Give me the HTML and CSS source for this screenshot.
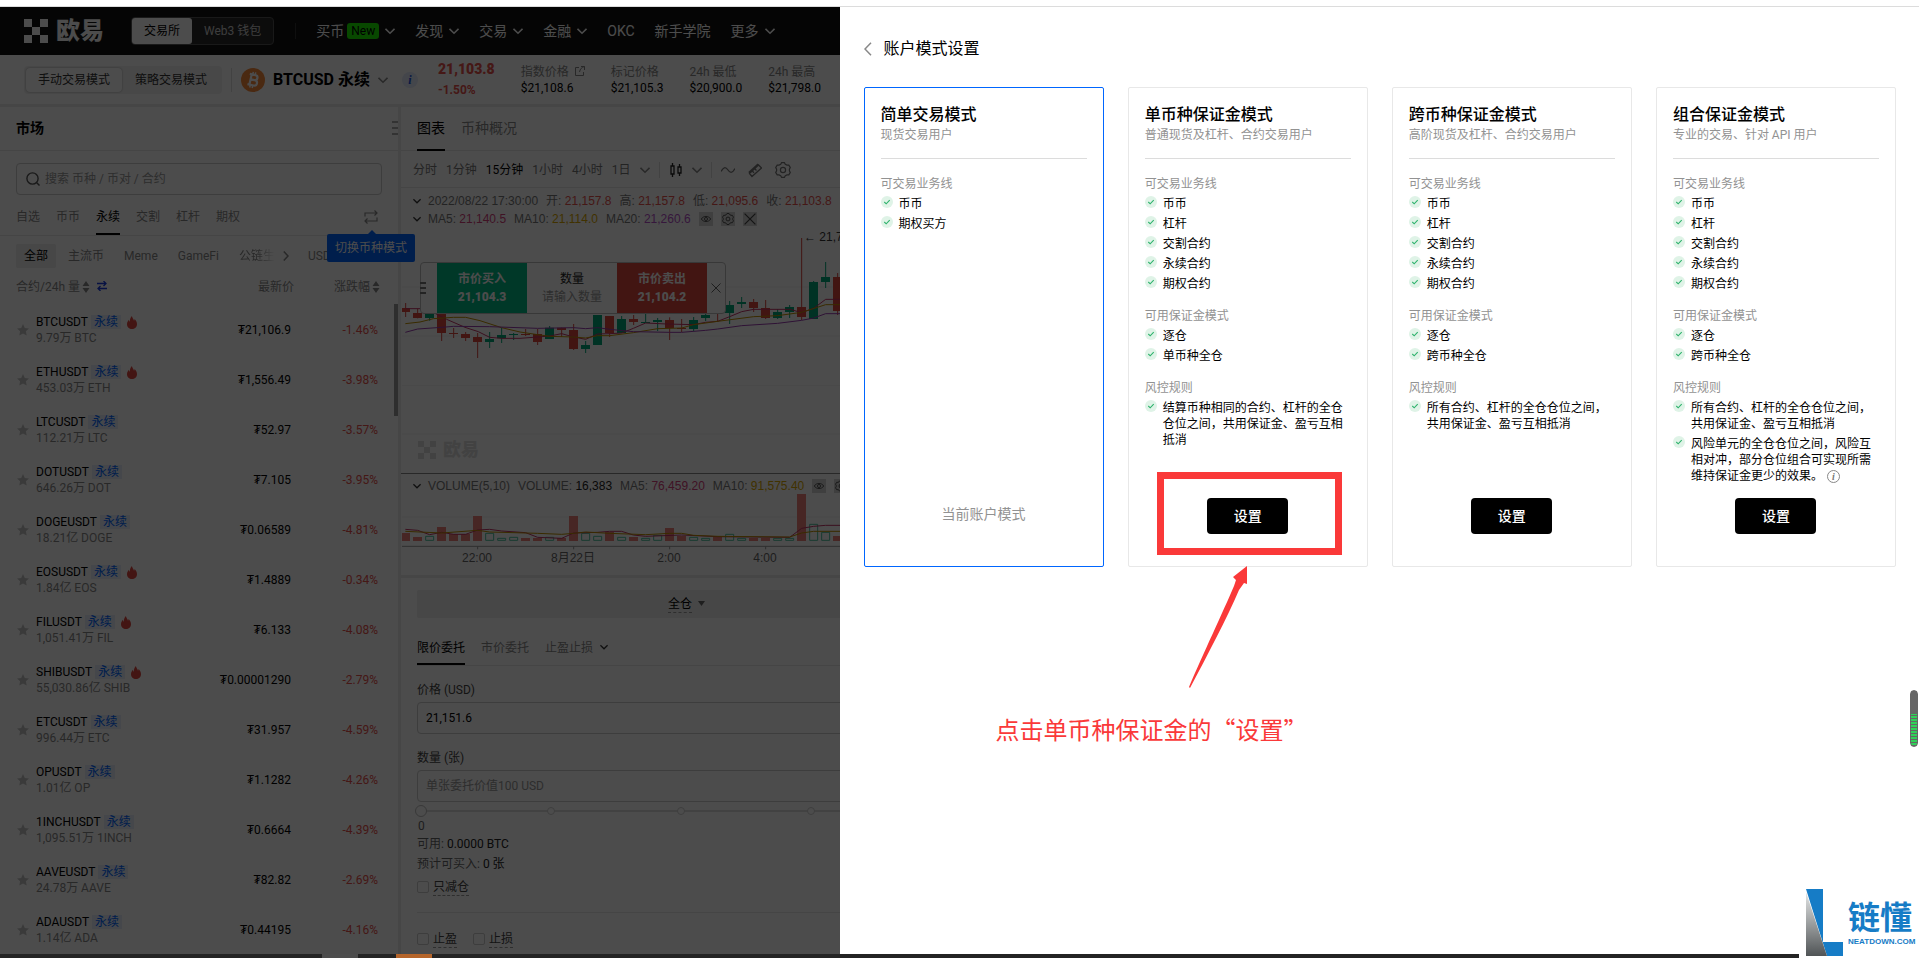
FILE: index.html
```html
<!DOCTYPE html>
<html lang="zh-CN">
<head>
  <meta charset="UTF-8" />
  <meta name="viewport" content="width=device-width, initial-scale=1" />
  <title>账户模式设置</title>
  <link rel="stylesheet" href="styles.css">
</head>
<body>
  <!-- shared icons -->
  <svg class="icon-defs" aria-hidden="true">
    <symbol id="i-logo" viewBox="0 0 24 24"><path fill="currentColor" d="M0 0h8v8H0zM16 0h8v8h-8zM8 8h8v8H8zM0 16h8v8H0zM16 16h8v8h-8z"/></symbol>
    <symbol id="i-down" viewBox="0 0 10 10"><path fill="none" stroke="currentColor" stroke-width="1.6" d="M0.5 2.8 5 7.2 9.5 2.8"/></symbol>
    <symbol id="i-star" viewBox="0 0 12 12"><path fill="currentColor" d="M6 0l1.800 3.900 4.200.5-3.100 2.900.8 4.300L6 9.500l-3.700 2.100.8-4.300L0 4.400l4.200-.5z"/></symbol>
    <symbol id="i-fire" viewBox="0 0 10 13"><path fill="currentColor" d="M4.900 0c.3 1.800 1.700 3 2.100 4.700.4-.5.6-1 .6-1.700C9.200 4.500 10 6.300 10 8.200 10 11 7.800 13 5 13S0 11 0 8.200C0 6.400.9 5 1.900 3.800c0 1 .3 1.600.9 2C2.700 3.600 3.400 1.500 4.900 0z"/></symbol>
    <symbol id="i-check" viewBox="0 0 12 12"><circle cx="6" cy="6" r="6" fill="#dff3e7"/><path fill="none" stroke="#2db26b" stroke-width="1.100" d="M3.300 6l1.900 1.800 3.500-3.600"/></symbol>
    <symbol id="i-sort" viewBox="0 0 8 12"><path fill="currentColor" d="M4 0l3.500 5h-7zM4 12l3.500-5h-7z"/></symbol>
    <symbol id="i-gear" viewBox="0 0 16 16"><g fill="none" stroke="currentColor" stroke-width="1.200"><path d="M5.700 2.200L6.600.7h2.800l.9 1.500 1.700.9 1.800 0 1.500 2.500-.9 1.500v1.800l.9 1.500-1.500 2.500h-1.800l-1.700.9-.9 1.500H6.600l-.9-1.500-1.700-.9H2.200L.7 10.400l.9-1.500V7.100L.7 5.600l1.500-2.500H4z"/><circle cx="8" cy="8" r="2.600"/></g></symbol>
    <symbol id="i-eye" viewBox="0 0 14 14"><g fill="none" stroke="currentColor"><path d="M1.500 7C4 3 10 3 12.500 7 10 11 4 11 1.500 7z"/><circle cx="7" cy="7" r="1.800"/></g></symbol>
    <symbol id="i-close" viewBox="0 0 10 10"><path fill="none" stroke="currentColor" d="M.5.500l9 9M9.500.500l-9 9"/></symbol>
  </svg>

  <div class="screen">
    <div class="exchange">
      <header class="topnav">
        <a class="brand" href="#"><svg><use href="#i-logo"/></svg>欧易</a>
        <div class="switch">
          <button class="on">交易所</button>
          <button>Web3 钱包</button>
        </div>
        <nav>
          <a href="#">买币 <b class="new">New</b><svg><use href="#i-down"/></svg></a>
          <a href="#">发现<svg><use href="#i-down"/></svg></a>
          <a href="#">交易<svg><use href="#i-down"/></svg></a>
          <a href="#">金融<svg><use href="#i-down"/></svg></a>
          <a href="#">OKC</a>
          <a href="#">新手学院</a>
          <a href="#">更多<svg><use href="#i-down"/></svg></a>
        </nav>
      </header>

      <div class="ticker">
        <div class="mode">
          <button class="on">手动交易模式</button>
          <button>策略交易模式</button>
        </div>
        <div class="pair">
          <svg class="btc" viewBox="0 0 24 24"><circle cx="12" cy="12" r="12" fill="#f7893b"/><g fill="none" stroke="#fff" stroke-width="2.200" transform="rotate(13 12 12)"><path d="M7.500 6.700h5.800a2.500 2.500 0 0 1 0 5.100H9.200h4.700a2.700 2.700 0 0 1 0 5.400H7.500M9.500 6.700v10.500"/><path stroke-width="1.500" d="M10.500 4v3M13 4v3M10.500 17v3M13 17v3"/></g></svg>
          <h1>BTCUSD 永续</h1>
          <svg class="caret"><use href="#i-down"/></svg>
          <i class="info">i</i>
        </div>
        <div class="last"><b>21,103.8</b><span>-1.50%</span></div>
        <dl>
          <div><dt>指数价格 <svg viewBox="0 0 10 10"><path fill="none" stroke="currentColor" d="M4 1.500H.5v8h8V6M6 .5h3.500V4M9.500.500C7 1 5 3 4.500 6"/></svg></dt><dd>$21,108.6</dd></div>
          <div><dt>标记价格</dt><dd>$21,105.3</dd></div>
          <div><dt>24h 最低</dt><dd>$20,900.0</dd></div>
          <div><dt>24h 最高</dt><dd>$21,798.0</dd></div>
        </dl>
      </div>

      <div class="workspace">
        <section class="market">
          <div class="market-head"><h2>市场</h2><span class="grip"></span></div>
          <label class="search">
            <svg viewBox="0 0 14 14"><g fill="none" stroke="currentColor" stroke-width="1.400"><circle cx="6.500" cy="6.500" r="5.600"/><path d="M10.500 10.500l3 3"/></g></svg>
            <input type="text" aria-label="搜索" placeholder="搜索 币种 / 币对 / 合约">
          </label>
          <div class="tabs">
            <a href="#">自选</a>
            <a href="#">币币</a>
            <a href="#" class="on">永续</a>
            <a href="#">交割</a>
            <a href="#">杠杆</a>
            <a href="#">期权</a>
            <button class="swap" aria-label="切换"><svg viewBox="0 0 14 14"><path fill="none" stroke="currentColor" stroke-width="1.200" d="M1 6.500V3h11.500M10.500.500L13 3l-2.500 2.500M13 7.500V11H1.500M3.500 8.500L1 11l2.500 2.500"/></svg></button>
            <span class="tip">切换币种模式</span>
          </div>
          <div class="chips">
            <button class="on">全部</button>
            <button>主流币</button>
            <button>Meme</button>
            <button>GameFi</button>
            <button class="cut">公链生</button>
            <svg viewBox="0 0 6 10"><path fill="none" stroke="currentColor" stroke-width="1.500" d="M.8.500L5 5 .8 9.500"/></svg>
            <button>USDT</button>
          </div>
          <table>
            <thead>
              <tr>
                <th>合约/24h 量<svg class="sort"><use href="#i-sort"/></svg><svg class="flip" viewBox="0 0 10 10"><path fill="none" stroke="currentColor" stroke-width="1.300" d="M0 2.500h9M6.500 0L9 2.500 6.500 5M10 7.500H1M3.500 5L1 7.500 3.500 10"/></svg></th>
                <th>最新价</th>
                <th>涨跌幅<svg class="sort"><use href="#i-sort"/></svg></th>
              </tr>
            </thead>
            <tbody>
              <tr><td><div class="coin"><svg class="star"><use href="#i-star"/></svg><div><p>BTCUSDT<em>永续</em><svg class="fire"><use href="#i-fire"/></svg></p><small>9.79万 BTC</small></div></div></td><td>₮21,106.9</td><td>-1.46%</td></tr>
              <tr><td><div class="coin"><svg class="star"><use href="#i-star"/></svg><div><p>ETHUSDT<em>永续</em><svg class="fire"><use href="#i-fire"/></svg></p><small>453.03万 ETH</small></div></div></td><td>₮1,556.49</td><td>-3.98%</td></tr>
              <tr><td><div class="coin"><svg class="star"><use href="#i-star"/></svg><div><p>LTCUSDT<em>永续</em></p><small>112.21万 LTC</small></div></div></td><td>₮52.97</td><td>-3.57%</td></tr>
              <tr><td><div class="coin"><svg class="star"><use href="#i-star"/></svg><div><p>DOTUSDT<em>永续</em></p><small>646.26万 DOT</small></div></div></td><td>₮7.105</td><td>-3.95%</td></tr>
              <tr><td><div class="coin"><svg class="star"><use href="#i-star"/></svg><div><p>DOGEUSDT<em>永续</em></p><small>18.21亿 DOGE</small></div></div></td><td>₮0.06589</td><td>-4.81%</td></tr>
              <tr><td><div class="coin"><svg class="star"><use href="#i-star"/></svg><div><p>EOSUSDT<em>永续</em><svg class="fire"><use href="#i-fire"/></svg></p><small>1.84亿 EOS</small></div></div></td><td>₮1.4889</td><td>-0.34%</td></tr>
              <tr><td><div class="coin"><svg class="star"><use href="#i-star"/></svg><div><p>FILUSDT<em>永续</em><svg class="fire"><use href="#i-fire"/></svg></p><small>1,051.41万 FIL</small></div></div></td><td>₮6.133</td><td>-4.08%</td></tr>
              <tr><td><div class="coin"><svg class="star"><use href="#i-star"/></svg><div><p>SHIBUSDT<em>永续</em><svg class="fire"><use href="#i-fire"/></svg></p><small>55,030.86亿 SHIB</small></div></div></td><td>₮0.00001290</td><td>-2.79%</td></tr>
              <tr><td><div class="coin"><svg class="star"><use href="#i-star"/></svg><div><p>ETCUSDT<em>永续</em></p><small>996.44万 ETC</small></div></div></td><td>₮31.957</td><td>-4.59%</td></tr>
              <tr><td><div class="coin"><svg class="star"><use href="#i-star"/></svg><div><p>OPUSDT<em>永续</em></p><small>1.01亿 OP</small></div></div></td><td>₮1.1282</td><td>-4.26%</td></tr>
              <tr><td><div class="coin"><svg class="star"><use href="#i-star"/></svg><div><p>1INCHUSDT<em>永续</em></p><small>1,095.51万 1INCH</small></div></div></td><td>₮0.6664</td><td>-4.39%</td></tr>
              <tr><td><div class="coin"><svg class="star"><use href="#i-star"/></svg><div><p>AAVEUSDT<em>永续</em></p><small>24.78万 AAVE</small></div></div></td><td>₮82.82</td><td>-2.69%</td></tr>
              <tr><td><div class="coin"><svg class="star"><use href="#i-star"/></svg><div><p>ADAUSDT<em>永续</em></p><small>1.14亿 ADA</small></div></div></td><td>₮0.44195</td><td>-4.16%</td></tr>
            </tbody>
          </table>
          <span class="scrollbar"></span>
        </section>

        <section class="center">
          <div class="chart-tabs"><a href="#" class="on">图表</a><a href="#">币种概况</a></div>
          <div class="toolbar">
            <button>分时</button>
            <button>1分钟</button>
            <button class="on">15分钟</button>
            <button>1小时</button>
            <button>4小时</button>
            <button>1日</button>
            <svg class="caret"><use href="#i-down"/></svg>
            <span class="bar"></span>
            <svg class="tool dark" viewBox="0 0 14 16"><path fill="none" stroke="currentColor" stroke-width="1.300" d="M2 4h3v8H2zM3.500 1v3M3.500 12v3M9 5h3v6H9zM10.500 2v3M10.500 11v3"/></svg>
            <svg class="caret"><use href="#i-down"/></svg>
            <span class="bar"></span>
            <svg class="tool" viewBox="0 0 14 16"><path fill="none" stroke="currentColor" stroke-width="1.300" d="M0 9.500C3 4 5 5 7 8s4 4 7-1.500"/></svg>
            <svg class="tool" viewBox="0 0 14 16"><path fill="none" stroke="currentColor" stroke-width="1.300" d="M.7 10.500L10 2M4 14.500l9.500-8.500L10.500 3 1.500 11.500zM7 7l1.500 1.500M4.500 9.200L6 10.700"/></svg>
            <svg class="gear"><use href="#i-gear"/></svg>
          </div>
          <div class="legend first">
            <svg class="fold"><use href="#i-down"/></svg>
            <span>2022/08/22 17:30:00</span>
            <span>开: <b class="red">21,157.8</b></span>
            <span>高: <b class="red">21,157.8</b></span>
            <span>低: <b class="red">21,095.6</b></span>
            <span>收: <b class="red">21,103.8</b></span>
          </div>
          <div class="legend">
            <svg class="fold"><use href="#i-down"/></svg>
            <span>MA5: <b class="pink">21,140.5</b></span>
            <span>MA10: <b class="gold">21,114.0</b></span>
            <span>MA20: <b class="purple">21,260.6</b></span>
            <button aria-label="显示"><svg><use href="#i-eye"/></svg></button>
            <button aria-label="设置"><svg><use href="#i-gear"/></svg></button>
            <button aria-label="关闭"><svg><use href="#i-close"/></svg></button>
          </div>
          <div class="price-pane">
            <svg class="plot" viewBox="6 0 1314 729">
              <path class="grid" d="M6 171h1314M6 318h1314M6 466h1314M6 612h1314"/>
              <path class="wick down" d="M17 219v42M53 236v29M125 250v83M161 294v30M197 306v27M233 309v75M377 297v21M413 297v48M485 293v28M521 282v78M629 258v63M701 255v30M809 262v68M845 267v39M953 250v26M1061 207v39M1097 210v57M1205 24v246M1313 129v126"/>
              <path class="wick up" d="M89 250v22M269 306v48M305 294v45M341 309v21M449 288v39M557 333v36M665 258v51M737 250v29M773 264v39M881 261v42M917 250v23M989 213v69M1025 201v33M1133 237v30M1169 225v39M1241 153v114M1277 96v78"/>
              <path class="body down" d="M3 234h27v12H3zM39 249h27v15H39zM111 250h27v59h-27zM147 309h27v3h-27zM183 312h27v12h-27zM219 321h27v15h-27zM363 312h27v3h-27zM399 312h27v24h-27zM471 293h27v7h-27zM507 300h27v57h-27zM615 258h27v51h-27zM687 267h27v9h-27zM795 270h27v24h-27zM831 294h27v3h-27zM1047 216h27v18h-27zM1083 234h27v30h-27zM1191 231h27v30h-27zM1299 141h27v102h-27z"/>
              <path class="body up" d="M75 250h27v14H75zM255 327h27v9h-27zM291 315h27v10h-27zM327 312h27v3h-27zM435 293h27v34h-27zM543 345h27v12h-27zM579 255h27v90h-27zM651 267h27v42h-27zM723 276h27v3h-27zM759 270h27v6h-27zM867 270h27v27h-27zM903 255h27v9h-27zM975 225h27v24h-27zM1011 216h27v6h-27zM1119 246h27v18h-27zM1155 231h27v15h-27zM1227 156h27v111h-27zM1263 141h27v15h-27z"/>
              <polyline class="ma pink" points="16,236 60,236 105,250 140,268 195,292 235,305 269,322 305,325 360,325 413,321 449,318 485,311 521,321 557,328 593,312 629,311 665,309 700,295 737,279 800,282 880,284 917,277 953,274 989,260 1025,245 1061,238 1170,238 1205,248 1241,235 1277,208 1320,208"/>
              <polyline class="ma gold" points="16,281 60,276 100,266 160,262 197,262 240,272 305,293 360,306 413,314 449,319 521,321 557,324 593,317 629,317 700,308 773,296 845,294 881,284 953,274 1061,260 1133,257 1205,247 1277,224 1320,224"/>
              <polyline class="ma purple" points="16,307 53,297 125,292 161,289 269,290 413,295 521,293 557,296 593,293 629,298 700,305 809,307 845,307 917,301 953,297 1025,287 1133,280 1205,271 1241,264 1277,251 1320,251"/>
            </svg>
            <span class="peak">← 21,798.0</span>
            <div class="watermark"><svg><use href="#i-logo"/></svg>欧易</div>
            <div class="quick">
              <span class="handle"></span>
              <button class="buy">市价买入<b>21,104.3</b></button>
              <label>数量<input type="text" placeholder="请输入数量"></label>
              <button class="sell">市价卖出<b>21,104.2</b></button>
              <svg class="x"><use href="#i-close"/></svg>
            </div>
          </div>
          <div class="legend volume">
            <svg class="fold"><use href="#i-down"/></svg>
            <span>VOLUME(5,10)</span>
            <span>VOLUME: <b class="black">16,383</b></span>
            <span>MA5: <b class="pink">76,459.20</b></span>
            <span>MA10: <b class="gold">91,575.40</b></span>
            <button aria-label="显示"><svg><use href="#i-eye"/></svg></button>
            <button aria-label="设置"><svg><use href="#i-gear"/></svg></button>
          </div>
          <svg class="plot" viewBox="6 789 1314 168">
            <path class="grid" d="M6 858h1314"/>
            <path class="vol down" d="M3 906h27v24H3zM39 918h27v12H39zM111 888h27v42h-27zM147 909h27v21h-27zM183 909h27v21h-27zM219 855h27v75h-27zM363 921h27v9h-27zM399 921h27v9h-27zM471 921h27v9h-27zM507 855h27v75h-27zM615 903h27v27h-27zM687 918h27v12h-27zM795 891h27v39h-27zM831 915h27v15h-27zM939 915h27v15h-27zM1047 921h27v9h-27zM1083 921h27v9h-27zM1191 789h27v141h-27zM1299 915h27v15h-27z"/>
            <path class="vol hollow" d="M77 916h24v12H77zM257 907h24v21h-24zM293 922h24v6h-24zM329 919h24v9h-24zM437 919h24v9h-24zM545 907h24v21h-24zM581 916h24v12h-24zM653 919h24v9h-24zM725 922h24v6h-24zM761 913h24v15h-24zM869 919h24v9h-24zM905 922h24v6h-24zM977 910h24v18h-24zM1013 922h24v6h-24zM1121 922h24v6h-24zM1157 922h24v6h-24zM1229 880h24v48h-24zM1265 904h24v24h-24z"/>
            <polyline class="ma pink" points="16,895 53,898 89,911 125,904 161,910 197,910 233,897 269,895 305,900 377,905 413,919 485,922 521,906 593,904 629,901 665,901 700,912 737,916 845,912 953,917 1169,919 1205,892 1241,886 1277,883 1320,883"/>
            <polyline class="ma gold" points="16,901 125,906 233,898 269,903 413,907 485,910 521,907 557,903 629,907 737,911 809,907 845,907 881,913 953,916 1169,918 1205,906 1241,901 1320,901"/>
            <path class="axis" d="M6 946h1314M233 946v9M521 946v9M809 946v9M1097 946v9"/>
          </svg>
          <div class="hours"><span>22:00</span><span>8月22日</span><span>2:00</span><span>4:00</span></div>

          <form class="order">
            <button type="button" class="margin"><u>全仓</u><svg viewBox="0 0 8 6"><path fill="currentColor" d="M0 0h7L3.500 5z"/></svg></button>
            <div class="order-tabs">
              <a href="#" class="on">限价委托</a>
              <a href="#">市价委托</a>
              <a href="#">止盈止损<svg><use href="#i-down"/></svg></a>
            </div>
            <label for="price">价格 (USD)</label>
            <input type="text" id="price" value="21,151.6">
            <label for="amount">数量 (张)</label>
            <input type="text" id="amount" placeholder="单张委托价值100 USD">
            <div class="slider">
              <span></span><span></span><span></span><span></span><span></span>
              <input type="range" aria-label="比例" min="0" max="100" value="0">
            </div>
            <output>0</output>
            <p>可用: <b>0.0000 BTC</b></p>
            <p>预计可买入: <b>0 张</b></p>
            <div class="checks"><label><input type="checkbox"><u>只减仓</u></label></div>
            <div class="checks last-row">
              <label><input type="checkbox"><u>止盈</u></label>
              <label><input type="checkbox"><u>止损</u></label>
            </div>
          </form>
        </section>
      </div>
    </div>

    <div class="mask"></div>

    <aside class="drawer">
      <header>
        <button aria-label="返回"><svg viewBox="0 0 8 14"><path fill="none" stroke="currentColor" stroke-width="1.500" d="M7 .8L1 7l6 6.200"/></svg></button>
        <h2>账户模式设置</h2>
      </header>
      <div class="cards">
        <article class="card current">
          <h3>简单交易模式</h3>
          <p class="who">现货交易用户</p>
          <h4>可交易业务线</h4>
          <ul>
            <li><svg><use href="#i-check"/></svg>币币</li>
            <li><svg><use href="#i-check"/></svg>期权买方</li>
          </ul>
          <p class="state">当前账户模式</p>
        </article>
        <article class="card">
          <h3>单币种保证金模式</h3>
          <p class="who">普通现货及杠杆、合约交易用户</p>
          <h4>可交易业务线</h4>
          <ul>
            <li><svg><use href="#i-check"/></svg>币币</li>
            <li><svg><use href="#i-check"/></svg>杠杆</li>
            <li><svg><use href="#i-check"/></svg>交割合约</li>
            <li><svg><use href="#i-check"/></svg>永续合约</li>
            <li><svg><use href="#i-check"/></svg>期权合约</li>
          </ul>
          <h4>可用保证金模式</h4>
          <ul>
            <li><svg><use href="#i-check"/></svg>逐仓</li>
            <li><svg><use href="#i-check"/></svg>单币种全仓</li>
          </ul>
          <h4>风控规则</h4>
          <ul>
            <li><svg><use href="#i-check"/></svg>结算币种相同的合约、杠杆的全仓仓位之间，共用保证金、盈亏互相抵消</li>
          </ul>
          <button class="set">设置</button>
        </article>
        <article class="card">
          <h3>跨币种保证金模式</h3>
          <p class="who">高阶现货及杠杆、合约交易用户</p>
          <h4>可交易业务线</h4>
          <ul>
            <li><svg><use href="#i-check"/></svg>币币</li>
            <li><svg><use href="#i-check"/></svg>杠杆</li>
            <li><svg><use href="#i-check"/></svg>交割合约</li>
            <li><svg><use href="#i-check"/></svg>永续合约</li>
            <li><svg><use href="#i-check"/></svg>期权合约</li>
          </ul>
          <h4>可用保证金模式</h4>
          <ul>
            <li><svg><use href="#i-check"/></svg>逐仓</li>
            <li><svg><use href="#i-check"/></svg>跨币种全仓</li>
          </ul>
          <h4>风控规则</h4>
          <ul>
            <li><svg><use href="#i-check"/></svg>所有合约、杠杆的全仓仓位之间，共用保证金、盈亏互相抵消</li>
          </ul>
          <button class="set">设置</button>
        </article>
        <article class="card">
          <h3>组合保证金模式</h3>
          <p class="who">专业的交易、针对 API 用户</p>
          <h4>可交易业务线</h4>
          <ul>
            <li><svg><use href="#i-check"/></svg>币币</li>
            <li><svg><use href="#i-check"/></svg>杠杆</li>
            <li><svg><use href="#i-check"/></svg>交割合约</li>
            <li><svg><use href="#i-check"/></svg>永续合约</li>
            <li><svg><use href="#i-check"/></svg>期权合约</li>
          </ul>
          <h4>可用保证金模式</h4>
          <ul>
            <li><svg><use href="#i-check"/></svg>逐仓</li>
            <li><svg><use href="#i-check"/></svg>跨币种全仓</li>
          </ul>
          <h4>风控规则</h4>
          <ul>
            <li><svg><use href="#i-check"/></svg>所有合约、杠杆的全仓仓位之间，共用保证金、盈亏互相抵消</li>
            <li><svg><use href="#i-check"/></svg><span>风险单元的全仓仓位之间，风险互相对冲，部分仓位组合可实现所需维持保证金更少的效果。<i class="note">i</i></span></li>
          </ul>
          <button class="set">设置</button>
        </article>
      </div>

      <!-- tutorial marks over the cards -->
      <span class="frame"></span>
      <svg class="arrow" viewBox="0 0 60 122"><path fill="#fa3939" d="M58 0v18l-3-1-5 7C38 52 18 90 1 122l-1-1C14 88 34 46 45 20l2-6-3-3z"/></svg>
      <p class="hint">点击单币种保证金的“设置”</p>
    </aside>
    <span class="battery"></span>
  </div>

  <footer class="taskbar"><span class="grey"></span><span class="orange"></span></footer>
  <div class="site-logo">
    <svg viewBox="0 0 38 68">
      <defs><linearGradient id="g" x1="0" y1="0" x2="0" y2="1"><stop offset="0" stop-color="#e4e6e6"/><stop offset="1" stop-color="#505456"/></linearGradient></defs>
      <path fill="#167cc6" d="M0 0h17v53h20v14H21z"/>
      <path fill="url(#g)" d="M0 3l21 64H0z"/>
    </svg>
    <div><b>链懂</b><span>NEATDOWN.COM</span></div>
  </div>
</body>
</html>
```

FILE: styles.css
```css
* {
  box-sizing: border-box;
}
body {
  margin: 0;
  height: 100vh;
  display: flex;
  flex-direction: column;
  padding-top: 6px;
  overflow: hidden;
  background: #fff;
  color: #000;
  font: 12px/16px Roboto, "Noto Sans CJK SC", sans-serif;
}
h1, h2, h3, h4, p, ul, dl, dd {
  margin: 0;
  padding: 0;
}
a {
  color: inherit;
  text-decoration: none;
}
button, input {
  font: inherit;
  color: inherit;
  border: 0;
  background: none;
  padding: 0;
  margin: 0;
}
button {
  cursor: pointer;
}
svg {
  flex: none;
  width: 10px;
  height: 10px;
}
.icon-defs {
  position: absolute;
  width: 0;
  height: 0;
}
.screen {
  position: relative;
  flex: 1;
  min-height: 0;
  overflow: hidden;
  border-top: 1px solid #dcdcdc;
}
.mask {
  position: absolute;
  inset: 0;
  background: rgba(0, 0, 0, 0.7);
  z-index: 5;
}

/* Top navigation */
.topnav {
  height: 48px;
  padding: 0 24px;
  display: flex;
  align-items: center;
  background: #121212;
  color: #fff;
  font-size: 14px;
}
.brand {
  display: flex;
  align-items: center;
  gap: 8px;
  font-size: 24px;
  line-height: 24px;
  font-weight: 900;
}
.brand svg {
  width: 24px;
  height: 24px;
}
.switch {
  display: flex;
  margin-left: 27px;
  height: 28px;
  border: 1px solid #555;
  border-radius: 4px;
  background: #2a2a2a;
  font-size: 12px;
  color: #ccc;
}
.switch button {
  padding: 0 12px;
  border-radius: 3px;
}
.switch .on {
  background: #fff;
  color: #000;
}
.topnav nav {
  display: flex;
  gap: 20px;
  margin-left: 21px;
  padding-left: 20px;
  border-left: 1px solid #333;
  line-height: 16px;
}
.topnav nav a {
  display: flex;
  align-items: center;
  gap: 6px;
}
.new {
  margin-left: -3px;
  padding: 0 4px;
  border-radius: 3px;
  background: #1bf000;
  color: #000;
  font-size: 12px;
  font-weight: 400;
}

/* Ticker */
.ticker {
  height: 49px;
  padding: 0 24px;
  display: flex;
  align-items: center;
}
.mode {
  display: flex;
  height: 28px;
  padding: 2px;
  border-radius: 4px;
  background: #f2f2f2;
  color: #333;
}
.mode button {
  padding: 0 13px;
}
.mode .on {
  padding: 0 12px;
  border-radius: 4px;
  background: #fff;
  box-shadow: 0 0 2px #999;
}
.pair {
  display: flex;
  align-items: center;
  gap: 8px;
  margin-left: 9px;
  padding-left: 9px;
  border-left: 1px solid #ddd;
  line-height: 14px;
}
.pair .btc {
  width: 24px;
  height: 24px;
}
.pair h1 {
  font-size: 16px;
  font-weight: 700;
}
.caret {
  color: #888;
}
.info {
  width: 16px;
  margin-left: 6px;
  border-radius: 8px;
  background: #e3e9fb;
  color: #2456e0;
  font: italic 700 12px/16px "Liberation Serif", serif;
  text-align: center;
}
.last {
  display: flex;
  flex-direction: column;
  gap: 5px;
  margin-left: 20px;
  color: #e8504c;
  font-weight: 700;
}
.last b {
  font-size: 14px;
}
.ticker dl {
  display: flex;
  gap: 26px;
  margin-left: 26px;
}
.ticker dt {
  color: #888;
}
.ticker dt svg {
  margin-left: 3px;
}

/* Workspace */
.workspace {
  display: grid;
  grid-template-columns: 398px 1fr;
  column-gap: 3px;
  border-top: 3px solid #eaeaea;
  background: #eaeaea;
}
.market {
  position: relative;
  background: #fff;
}
.market-head {
  position: relative;
  height: 44px;
  padding: 12px 16px;
  border-bottom: 1px solid #e6e6e6;
}
.market-head h2 {
  font-size: 14px;
  line-height: 18px;
}
.grip, .handle {
  position: absolute;
  top: 14px;
  right: 0;
  width: 6px;
  height: 14px;
  background: repeating-linear-gradient(#aaa 0 2px, transparent 2px 6px);
}
.search {
  display: flex;
  align-items: center;
  gap: 5px;
  height: 32px;
  margin: 12px 16px 0;
  padding: 0 9px;
  border: 1px solid #ccc;
  border-radius: 4px;
  color: #555;
}
.search svg {
  width: 14px;
  height: 14px;
}
.search input {
  flex: 1;
}
input::placeholder {
  color: #999;
  opacity: 1;
}
.tabs {
  position: relative;
  display: flex;
  align-items: flex-end;
  gap: 16px;
  height: 41px;
  padding: 0 16px;
  border-bottom: 1px solid #e6e6e6;
  color: #888;
}
.tabs a {
  padding-bottom: 8px;
  border-bottom: 2px solid transparent;
}
.tabs .on {
  color: #000;
  border-color: #000;
}
.swap {
  margin-left: auto;
  padding-bottom: 11px;
  color: #888;
}
.swap svg {
  display: block;
  width: 14px;
  height: 14px;
  margin-right: 4px;
}
.tip {
  position: absolute;
  z-index: 2;
  top: 39px;
  left: 327px;
  padding: 6px 8px;
  border-radius: 2px;
  background: #0066ff;
  color: #fff;
  white-space: nowrap;
}
.tip::before {
  content: "";
  position: absolute;
  top: -4px;
  left: 41px;
  border: 4px solid transparent;
  border-top: 0;
  border-bottom-color: #0066ff;
}
.chips {
  display: flex;
  align-items: center;
  gap: 4px;
  margin: 8px 16px 0;
  overflow: hidden;
  color: #888;
}
.chips button {
  flex: none;
  height: 24px;
  padding: 0 8px;
  border-radius: 2px;
}
.chips .on {
  background: #ededed;
  color: #000;
}
.chips .cut {
  padding-right: 0;
  -webkit-mask: linear-gradient(90deg, #000 60%, transparent);
}
.chips svg {
  width: 6px;
  margin: 0 7px 0 4px;
}
.market table {
  width: 366px;
  margin: 0 16px;
  border-collapse: collapse;
  table-layout: fixed;
}
.market th, .market td {
  padding: 0;
  text-align: right;
  font-weight: 400;
}
.market th {
  height: 37px;
  width: 86px;
  color: #888;
}
.market th:first-child {
  width: auto;
  text-align: left;
}
.market th:nth-child(2) {
  width: 112px;
  padding-right: 2px;
}
.market th:last-child {
  padding-right: 2px;
}
.market td {
  height: 50px;
}
.market td:nth-child(2) {
  padding-right: 5px;
}
.market td:last-child {
  padding-right: 4px;
  color: #e8504c;
}
.market td:first-child {
  text-align: left;
  white-space: nowrap;
}
.sort {
  width: 8px;
  height: 12px;
  margin-left: 2px;
  vertical-align: -2px;
}
.flip {
  margin-left: 7px;
  color: #1b3fe0;
}
.coin {
  display: flex;
  align-items: center;
  gap: 7px;
}
.coin .star {
  width: 12px;
  height: 12px;
  margin-left: 1px;
  color: #c4c4c4;
}
.coin p {
  display: flex;
  align-items: center;
}
.coin em {
  margin: 0 6px 0 3px;
  padding: 0 3px;
  line-height: 14px;
  background: #e6edfb;
  color: #0066ff;
  font-style: normal;
}
.coin .fire {
  height: 13px;
  color: #e04840;
}
.coin small {
  display: block;
  font-size: 12px;
  color: #888;
}
.scrollbar {
  position: absolute;
  top: 197px;
  right: 0;
  width: 4px;
  height: 112px;
  background: #999;
}

/* Chart */
.center {
  min-width: 0;
  background: #fff;
}
.chart-tabs {
  display: flex;
  gap: 16px;
  height: 44px;
  padding: 13px 16px 0;
  border-bottom: 1px solid #e6e6e6;
  color: #888;
  font-size: 14px;
}
.chart-tabs .on {
  height: 31px;
  border-bottom: 2px solid #000;
  color: #000;
}
.toolbar {
  display: flex;
  align-items: center;
  gap: 9px;
  height: 37px;
  padding: 2px 13px 0 12px;
  border-bottom: 1px solid #e6e6e6;
  color: #777;
}
.toolbar .on {
  color: #000;
}
.toolbar .bar {
  width: 1px;
  height: 16px;
  background: #ddd;
}
.toolbar .tool {
  width: 14px;
  height: 16px;
  margin-right: 4px;
}
.toolbar .dark {
  margin-right: 0;
  color: #222;
}
.toolbar .gear {
  width: 16px;
  height: 16px;
}
.legend {
  display: flex;
  align-items: center;
  gap: 8px;
  height: 18px;
  padding-left: 12px;
  color: #777;
  font-family: "Liberation Sans", "Noto Sans CJK SC", sans-serif;
  white-space: nowrap;
}
.legend.first {
  margin-top: 4px;
}
.legend b {
  font-weight: 400;
}
.legend .fold {
  width: 8px;
  margin-right: -1px;
  color: #333;
}
.legend button {
  display: grid;
  place-items: center;
  width: 14px;
  height: 14px;
  background: #d4d4d4;
  color: #444;
}
.legend button svg {
  width: 12px;
  height: 12px;
}
.red { color: #e8504c; }
.legend .pink { color: #d6417d; }
.legend .gold { color: #d9a700; }
.legend .purple { color: #b44fc8; }
.black { color: #222; }
.price-pane {
  position: relative;
  margin-top: 2px;
  padding-left: 1px;
  border-bottom: 1px solid #888;
}
.plot {
  display: block;
  width: 438px;
  height: auto;
}
.center > .plot {
  margin-left: 1px;
}
.plot path, .plot polyline {
  fill: none;
  stroke-width: 3;
}
.plot .grid { stroke: #f2f2f2; }
.plot .axis { stroke: #999; }
.plot .wick.down { stroke: #dd463d; }
.plot .wick.up { stroke: #00a878; }
.plot .body.down { fill: #dd463d; }
.plot .body.up { fill: #00a878; }
.plot .vol.down { fill: #ee8078; }
.plot .vol.hollow { stroke: #4fc3a0; }
.plot .pink { stroke: #c43468; }
.plot .gold { stroke: #c09000; }
.plot .purple { stroke: #9b3cb0; }
.peak {
  position: absolute;
  top: -1px;
  left: 403px;
  color: #333;
  font-family: "Liberation Sans", sans-serif;
}
.watermark {
  position: absolute;
  left: 17px;
  bottom: 14px;
  display: flex;
  align-items: center;
  gap: 7px;
  color: #ddd;
  font-size: 18px;
  line-height: 18px;
  font-weight: 900;
}
.watermark svg {
  width: 18px;
  height: 18px;
}
.quick {
  position: absolute;
  top: 32px;
  left: 19px;
  display: flex;
  height: 52px;
  padding-left: 16px;
  border: 1px solid #bbb;
  border-radius: 4px;
  background: #fff;
}
.quick button, .quick label {
  display: flex;
  flex-direction: column;
  align-items: center;
  justify-content: center;
  gap: 2px;
  width: 90px;
  color: #fff;
  font-weight: 700;
}
.quick .buy { background: #00bd87; }
.quick .sell { background: #dd463d; }
.quick label {
  color: #222;
  font-weight: 400;
}
.quick input {
  width: 100%;
  height: 16px;
  text-align: center;
}
.quick .handle {
  top: 19px;
  left: -1px;
  background: repeating-linear-gradient(#777 0 2px, transparent 2px 5px);
  height: 12px;
}
.quick .x {
  align-self: center;
  margin: 0 4px;
  color: #666;
}
.legend.volume {
  padding-top: 4px;
  height: 20px;
}
.hours {
  display: grid;
  grid-auto-flow: column;
  grid-auto-columns: 96px;
  height: 25px;
  padding-left: 28px;
  color: #666;
  font-family: "Liberation Sans", "Noto Sans CJK SC", sans-serif;
  text-align: center;
}

/* Order form */
.order {
  display: flex;
  flex-direction: column;
  width: 572px;
  padding: 12px 16px 0;
  border-top: 3px solid #eaeaea;
}
.margin {
  display: flex;
  align-items: center;
  justify-content: center;
  gap: 6px;
  height: 28px;
  border-radius: 2px;
  background: #ededed;
}
.margin svg {
  width: 8px;
  height: 6px;
  color: #666;
}
.order u {
  text-decoration: none;
  border-bottom: 1px dashed #999;
}
.order-tabs {
  display: flex;
  gap: 16px;
  height: 48px;
  margin-bottom: 12px;
  padding-top: 22px;
  border-bottom: 1px solid #e6e6e6;
  color: #888;
}
.order-tabs svg {
  margin-left: 7px;
  width: 8px;
  color: #333;
}
.order-tabs .on {
  border-bottom: 2px solid #000;
  color: #000;
}
.order > label {
  padding: 4px 0;
  color: #444;
}
.order > input {
  height: 32px;
  margin-bottom: 12px;
  padding: 0 8px;
  border: 1px solid #ccc;
  border-radius: 4px;
}
.order #amount {
  margin-bottom: 2px;
}
.slider {
  position: relative;
  display: flex;
  align-items: center;
  justify-content: space-between;
  height: 14px;
  margin: 0 12px 0 0;
  background: linear-gradient(#ddd, #ddd) center / 100% 2px no-repeat;
}
.slider span {
  width: 8px;
  height: 8px;
  border: 1px solid #d0d0d0;
  border-radius: 50%;
  background: #fff;
}
.slider input {
  position: absolute;
  left: -2px;
  width: 100%;
  height: 12px;
  appearance: none;
}
.slider input::-webkit-slider-thumb {
  appearance: none;
  width: 12px;
  height: 12px;
  border: 1px solid #bbb;
  border-radius: 50%;
  background: #fff;
}
.order output {
  padding-left: 1px;
  color: #666;
}
.order p {
  line-height: 20px;
  color: #666;
}
.order p b {
  color: #222;
  font-weight: 400;
}
.checks {
  display: flex;
  gap: 16px;
  height: 39px;
  padding-top: 5px;
  border-bottom: 1px solid #e6e6e6;
  color: #444;
}
.checks label {
  display: flex;
  align-items: flex-start;
  gap: 4px;
}
.checks input {
  appearance: none;
  width: 12px;
  height: 12px;
  margin-top: 2px;
  border: 1px solid #ccc;
  border-radius: 2px;
}
.last-row {
  padding-top: 18px;
  border: 0;
}

/* Drawer */
.drawer {
  position: absolute;
  z-index: 6;
  top: 0;
  right: 0;
  bottom: 0;
  width: 56.25%;
  padding: 0 23px 0 24px;
  background: #fff;
}
.drawer header {
  display: flex;
  align-items: center;
  gap: 14px;
  height: 80px;
  padding-top: 4px;
}
.drawer header button {
  width: 6px;
  height: 14px;
  color: #888;
}
.drawer header svg {
  display: block;
  width: 8px;
  height: 14px;
}
.drawer h2 {
  font-size: 16px;
  line-height: 24px;
  font-weight: 400;
}
.cards {
  display: grid;
  grid-template-columns: repeat(4, 1fr);
  gap: 24px;
}
.card {
  display: flex;
  flex-direction: column;
  min-height: 480px;
  padding: 15px 16px 32px;
  border: 1px solid #e8e8e8;
  border-radius: 2px;
}
.card.current {
  border-color: #0066ff;
}
.card h3 {
  font-size: 16px;
  line-height: 24px;
  font-weight: 500;
}
.card .who {
  padding-bottom: 15px;
  border-bottom: 1px solid #dcdcdc;
  color: #929292;
  white-space: nowrap;
}
.card h4 {
  margin: 12px 0 4px;
  color: #929292;
  font-weight: 400;
}
.who + h4 {
  margin-top: 17px;
}
.card ul {
  list-style: none;
}
.card li {
  display: flex;
  gap: 6px;
  margin-bottom: 4px;
}
.card li svg {
  width: 12px;
  height: 12px;
}
.note {
  display: inline-block;
  width: 13px;
  height: 13px;
  margin-left: 4px;
  border: 1px solid #888;
  border-radius: 50%;
  color: #777;
  font: italic 700 10px/11px "Liberation Serif", serif;
  text-align: center;
}
.state, .set {
  align-self: center;
  margin-top: auto;
  height: 36px;
  font-size: 14px;
  line-height: 32px;
}
.state {
  color: #929292;
}
.set {
  width: 81px;
  border-radius: 4px;
  background: #000;
  color: #fff;
  line-height: 36px;
  font-weight: 500;
}
.frame {
  position: absolute;
  top: 465px;
  left: 317px;
  width: 185px;
  height: 83px;
  border: 7px solid #fa3939;
}
.arrow {
  position: absolute;
  top: 559px;
  left: 349px;
  width: 60px;
  height: 122px;
}
.hint {
  position: absolute;
  top: 704px;
  left: 156px;
  color: #fa3939;
  font: 24px/36px "Noto Sans CJK SC", sans-serif;
}
.battery {
  position: absolute;
  z-index: 7;
  top: 683px;
  right: 1px;
  width: 8px;
  height: 57px;
  border: 1px solid #666;
  border-radius: 4px;
  background: linear-gradient(#666 0 23px, transparent 23px), repeating-linear-gradient(#666 0 1px, #30d158 1px 3px);
}

/* Bottom strip */
.taskbar {
  display: flex;
  gap: 38px;
  height: 4px;
  padding-left: 322px;
  background: #242424;
}
.taskbar span {
  width: 36px;
}
.taskbar .grey { background: #4d4d4d; }
.taskbar .orange { background: #b5652b; }
.site-logo {
  position: fixed;
  z-index: 8;
  right: 0;
  bottom: 0;
  display: flex;
  gap: 4px;
  width: 120px;
  height: 72px;
  padding: 3px 0 0 7px;
  background: #fff;
  color: #167cc6;
}
.site-logo svg {
  width: 38px;
  height: 68px;
}
.site-logo div {
  display: flex;
  flex-direction: column;
  padding-top: 10px;
}
.site-logo b {
  font-size: 32px;
  line-height: 38px;
  font-weight: 700;
}
.site-logo span {
  font: 700 8px/10px "Liberation Sans", sans-serif;
}
```
